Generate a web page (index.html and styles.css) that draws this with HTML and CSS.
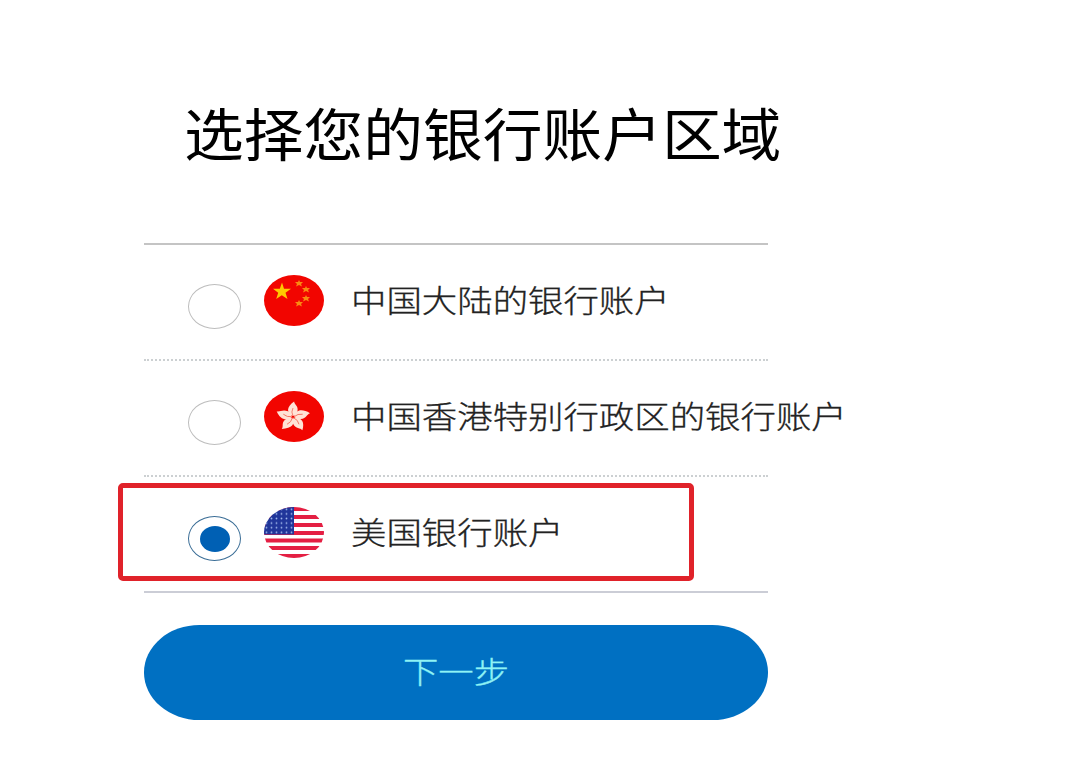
FILE: index.html
```
<!DOCTYPE html>
<html lang="zh-CN">
<head>
    <meta charset="UTF-8">
    <meta name="viewport" content="width=device-width, initial-scale=1.0">
    <title>选择您的银行账户区域</title>
    <link rel="stylesheet" href="styles.css">
</head>
<body>
    <div class="container">
        <h1>选择您的银行账户区域</h1>

        <form>
            <div class="options">
                <label class="option">
                    <input type="radio" name="region" value="cn">
                    <svg class="flag" viewBox="0 0 60 51" preserveAspectRatio="none">
                        <ellipse cx="30" cy="25.500" rx="30" ry="25.500" fill="#f20500"/>
                        <path fill="#ffc800" d="M18 7.500l2 6.300 7-.1-5.500 4 2 6.300-5.700-3.800-5.600 3.800 2-6.300-5.200-4 6.800.1z"/>
                        <g fill="#f98a12">
                            <path id="star" d="M35 5l1 2 3 0-2 2 1 2.500-3-1.500-3 1.500 1-2.500-2-2 3 0z"/>
                            <use href="#star" x="7" y="6"/>
                            <use href="#star" x="7" y="15"/>
                            <use href="#star" x="0" y="20"/>
                        </g>
                    </svg>
                    <span class="name">中国大陆的银行账户</span>
                </label>

                <label class="option">
                    <input type="radio" name="region" value="hk">
                    <svg class="flag" viewBox="0 0 60 51" preserveAspectRatio="none">
                        <ellipse cx="30" cy="25.500" rx="30" ry="25.500" fill="#f20500"/>
                        <g transform="translate(29 26) scale(1.130 1)">
                            <g id="petal">
                                <path fill="#ffe3d6" d="M0-1C-6-4-6-10 1-15.500C1-12.500 5-11 4-6C3.500-3.500 2-2 0-1z"/>
                                <path fill="none" stroke="#f4705f" stroke-width=".8" d="M0-1Q-2-5 0-9"/>
                            </g>
                            <use href="#petal" transform="rotate(72)"/>
                            <use href="#petal" transform="rotate(144)"/>
                            <use href="#petal" transform="rotate(216)"/>
                            <use href="#petal" transform="rotate(288)"/>
                        </g>
                    </svg>
                    <span class="name">中国香港特别行政区的银行账户</span>
                </label>

                <label class="option selected">
                    <input type="radio" name="region" value="us" checked>
                    <svg class="flag" viewBox="0 0 60 51" preserveAspectRatio="none">
                        <defs>
                            <clipPath id="round"><ellipse cx="30" cy="25.500" rx="30" ry="25.500"/></clipPath>
                            <pattern id="stars" width="5" height="4.600" patternUnits="userSpaceOnUse">
                                <circle cx="2.500" cy="2.300" r=".9" fill="#9fb6ea"/>
                            </pattern>
                        </defs>
                        <g clip-path="url(#round)">
                            <path fill="#fff" d="M0 0h60v51H0z"/>
                            <path stroke="#e41f43" stroke-width="4" d="M0 2h60M0 10h60M0 18h60M0 26h60M0 33.500h60M0 41h60M0 49h60"/>
                            <path fill="#20369a" d="M0 0h30v27.500H0z"/>
                            <path fill="url(#stars)" d="M0 0h30v27.500H0z"/>
                        </g>
                    </svg>
                    <span class="name">美国银行账户</span>
                </label>
            </div>

            <button type="button"><span>下一步</span></button>
        </form>
    </div>
</body>
</html>
```
FILE: styles.css
```
* {
    box-sizing: border-box;
}

body {
    font-family: "Noto Sans CJK SC", sans-serif;
    margin: 0;
    background-color: #fff;
    color: #222;
}

.container {
    width: 624px;
    margin-left: 144px;
    padding-top: 86px;
}

h1 {
    margin: 0 0 67px 40px;
    font-size: 57px;
    font-weight: 400;
    line-height: 90px;
    color: #000;
    white-space: nowrap;
    transform: scaleX(1.048);
    transform-origin: left center;
}

.options {
    border-top: 2px solid #c4c4c4;
    margin-bottom: 32px;
}

.option {
    position: relative;
    display: flex;
    align-items: center;
    height: 116px;
    padding-left: 44px;
    border-bottom: 2px dotted #ccd0d2;
    white-space: nowrap;
}

.option:last-child {
    border-bottom: 2px solid #cbcdd6;
}

.option input {
    appearance: none;
    flex: none;
    display: grid;
    place-items: center;
    width: 53px;
    height: 45px;
    margin: 9px 23px 0 0;
    border: 1.5px solid #bdbdbd;
    border-radius: 50%;
    background-color: #fff;
}

.option input:checked {
    border-color: #3a6d96;
}

.option input:checked::before {
    content: "";
    width: 30px;
    height: 26px;
    border-radius: 50%;
    background-color: #0060b4;
}

.flag {
    flex: none;
    width: 60px;
    height: 51px;
    margin: 0 27px 3px 0;
}

/* wide lettering */
.name {
    margin-bottom: 6px;
    font-size: 30.5px;
    font-weight: 300;
    line-height: 40px;
    -webkit-text-stroke: 0.3px #222;
    transform: scaleX(1.161);
    transform-origin: left center;
}

/* red frame round the chosen region */
.selected::after {
    content: "";
    position: absolute;
    box-sizing: border-box;
    left: -26px;
    top: 6px;
    width: 576px;
    height: 98px;
    border: 5px solid #e0222a;
    border-radius: 5px;
}

button {
    display: block;
    width: 100%;
    height: 95px;
    padding: 0 0 5px;
    border: 0;
    border-radius: 56px / 48px;
    background-color: #0070c2;
    color: #8ff3f5;
    font-family: inherit;
    font-size: 30px;
    font-weight: 300;
}

button span {
    display: inline-block;
    -webkit-text-stroke: 0.3px #8ff3f5;
    transform: scaleX(1.18);
}
```
